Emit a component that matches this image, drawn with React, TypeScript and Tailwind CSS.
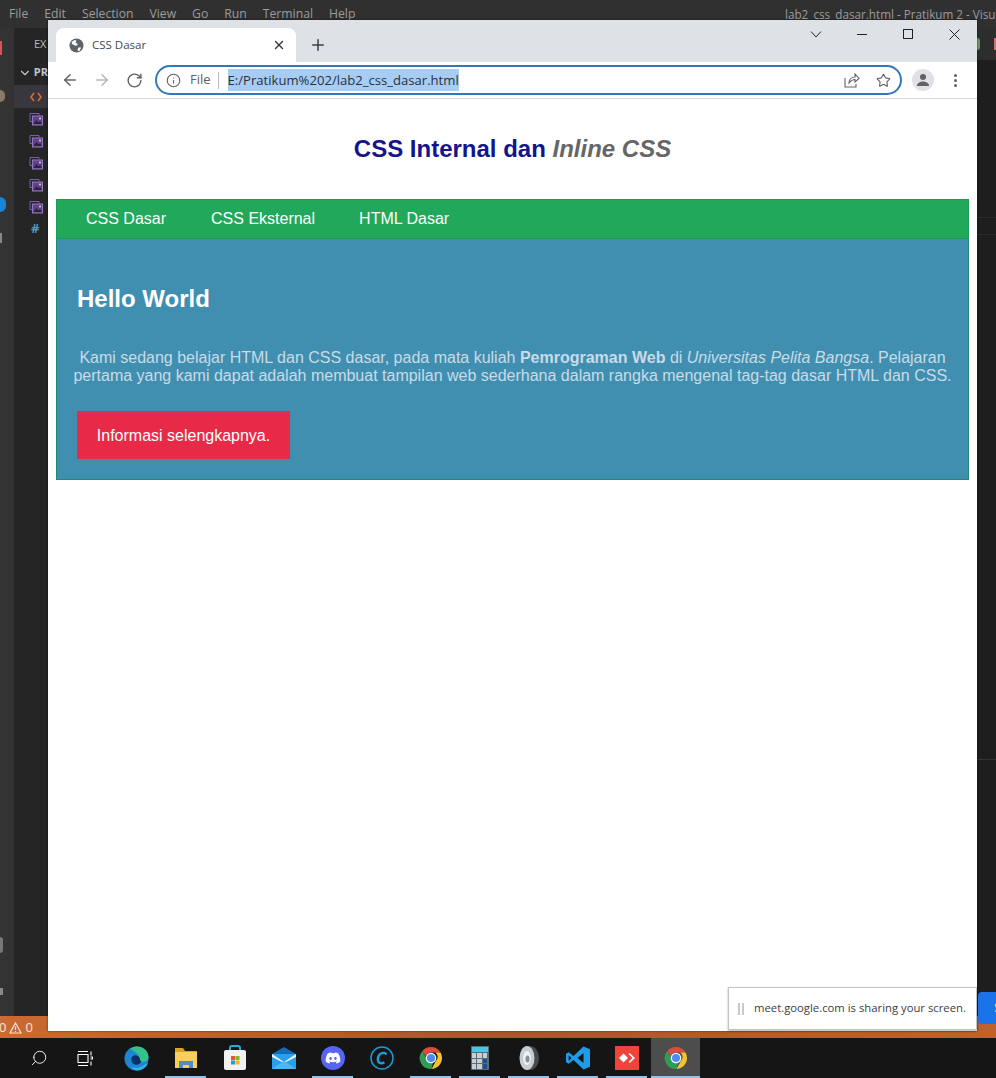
import { ArrowLeft, ArrowRight, ChevronDown, ChevronRight, Info, Plus, RotateCw, Search, Star, X } from "lucide-react";
import { FaDiscord } from "react-icons/fa";

const menu = ["File", "Edit", "Selection", "View", "Go", "Run", "Terminal", "Help"];

function ImageFileIcon() {
  return (
    <svg width="14" height="14" viewBox="0 0 14 14" fill="none">
      <path d="M1 1.500h9v2M1 1.500v8h2" stroke="#7a5ea6" strokeWidth="1" />
      <rect x="3.500" y="4" width="10" height="9" fill="#5f4389" stroke="#9479bd" strokeWidth="1" />
      <path d="M4.500 12l3-4 2 2.500 1.500-1.500 2 3z" fill="#2a2330" />
      <circle cx="11" cy="6.500" r="1" fill="#d8cdea" />
    </svg>
  );
}

function ChromeLogo() {
  return (
    <svg width="24" height="24" viewBox="0 0 24 24">
      <path d="M12 1a11 11 0 0 1 9.530 5.500H12a5.500 5.500 0 0 0-5.200 3.700L3.300 4.900A11 11 0 0 1 12 1z" fill="#dd4b3e" />
      <path d="M21.530 6.500A11 11 0 0 1 12.600 23l4.200-7.900a5.500 5.500 0 0 0-.5-8.600z" fill="#f4c430" />
      <path d="M3.300 4.900l4.600 8.400a5 5 0 0 0 6 3.600L12.600 23A11 11 0 0 1 3.300 4.900z" fill="#2f9e54" />
      <circle cx="12" cy="12" r="5.300" fill="#fff" />
      <circle cx="12" cy="12" r="4" fill="#4c8bf5" />
    </svg>
  );
}

function EdgeLogo() {
  return (
    <svg width="25" height="25" viewBox="0 0 26 26">
      <circle cx="13" cy="13" r="12.500" fill="#1b86d4" />
      <path d="M6 3C9 1 11.500.5 14 .5c6 0 11.500 4.500 11.500 11 0 3-2 5-5 5-2 0-4-1-4-2.500 0-3-3-7.500-10.500-11z" fill="#35c28a" />
      <path d="M8 12c2-4 8-3 8.500 1.500 0 1 .5 2 1.500 2.500-1.500 3-5 4.500-7.500 3C8 17.500 7 14.500 8 12z" fill="#0b2f6b" />
      <path d="M25 18c-2 4.500-6.500 7.500-11 7.500-3 0-5-1.500-6-4 3 1.500 8 2 11-.5 2-1.500 4-2.500 6-3z" fill="#2fb5e8" />
    </svg>
  );
}

function FolderLogo() {
  return (
    <svg width="24" height="22" viewBox="0 0 24 22">
      <path d="M1 1h8l2 3h12v3H1z" fill="#d9a520" />
      <rect x="1" y="5" width="22" height="16" fill="#f6cf5c" />
      <path d="M5 21v-7h14v7h-4v-3H9v3z" fill="#4d8fc4" />
    </svg>
  );
}

function StoreLogo() {
  return (
    <svg width="24" height="26" viewBox="0 0 24 26">
      <path d="M7 7V3a2 2 0 0 1 2-2h6a2 2 0 0 1 2 2v4" fill="none" stroke="#33a6d8" strokeWidth="2" />
      <rect x="1" y="5" width="22" height="20" rx="2" fill="#f2f2f2" />
      <rect x="8" y="11" width="4" height="4" fill="#e8562a" />
      <rect x="12.500" y="11" width="4" height="4" fill="#7cb82f" />
      <rect x="8" y="15.500" width="4" height="4" fill="#1e9ae0" />
      <rect x="12.500" y="15.500" width="4" height="4" fill="#f5b50a" />
    </svg>
  );
}

function MailLogo() {
  return (
    <svg width="24" height="22" viewBox="0 0 24 22">
      <path d="M0 7l12-7 12 7v1H0z" fill="#0f6cbd" />
      <rect y="7" width="24" height="15" fill="#2aa0e8" />
      <path d="M0 7l12 8 12-8v3l-12 6L0 10z" fill="#e8f6fd" />
      <path d="M0 22l12-8 12 8z" fill="#4cb8f0" />
    </svg>
  );
}

function CCleanerLogo() {
  return (
    <svg width="24" height="24" viewBox="0 0 24 24" fill="none">
      <circle cx="12" cy="12" r="11" stroke="#1b9bd8" strokeWidth="1.500" />
      <path d="M16.500 8.500C15.500 6.800 13 6.500 11 7.500c-3 1.500-4 6-2.500 8.500 1.200 1.700 4 1.500 5.800.2" stroke="#1b9bd8" strokeWidth="2.500" />
    </svg>
  );
}

function CalcLogo() {
  const keys = ["a", "b", "c", "d", "e", "f", "g", "h", "i"];
  return (
    <div className="flex h-[24px] w-[18px] flex-col gap-[1px] rounded-[1px] bg-[#5b6b78] p-[1px]">
      <div className="h-[5px] bg-[#45c8ea]" />
      <div className="grid flex-1 grid-cols-3 gap-[1px]">
        {keys.map((k) => (
          <div key={k} className={k === "f" || k === "i" ? "bg-[#1f4f8f]" : "bg-[#c7ced4]"} />
        ))}
      </div>
    </div>
  );
}

function SpeakerLogo() {
  return (
    <svg width="20" height="26" viewBox="0 0 20 26">
      <ellipse cx="11" cy="13" rx="9" ry="12" fill="#4a4a4a" />
      <ellipse cx="8" cy="13" rx="7.500" ry="12" fill="#c9cdd0" />
      <ellipse cx="8" cy="13" rx="4" ry="7" fill="#eef0f1" />
      <ellipse cx="8.500" cy="14" rx="2" ry="3.500" fill="#8c9094" />
    </svg>
  );
}

function VSCodeLogo() {
  return (
    <svg width="24" height="24" viewBox="0 0 24 24">
      <path d="M17.500.5L24 3.200v17.600l-6.500 2.700-10-9.500-4.800 3.700L0 16.300V7.700l2.700-1.400 4.800 3.700z" fill="#1f9ce8" />
      <path d="M17.500 7l-6 5 6 5z" fill="#141414" />
      <path d="M2.700 9.300v5.400L5.500 12z" fill="#141414" />
    </svg>
  );
}

function AnyDeskLogo() {
  return (
    <div className="flex h-[24px] w-[24px] items-center justify-center bg-[#ef443b]">
      <svg width="16" height="10" viewBox="0 0 16 10">
        <path d="M0 5l4.500-4.500L9 5 4.500 9.500z" fill="#fff" />
        <path d="M9.500 1l4 4-4 4 1.200 1 5.300-5-5.300-5z" fill="#fff" />
      </svg>
    </div>
  );
}

const taskbar = [
  { id: "search", icon: <Search size={18} strokeWidth={1.2} className="-scale-x-100 text-white" />, open: false },
  {
    id: "view",
    icon: (
      <svg width="16" height="15" viewBox="0 0 16 15" fill="none" stroke="#fff" strokeWidth="1.100" className="-ml-[5px]">
        <path d="M1 .5h10M1 14.500h10M1 3.500h10v8H1zM14 .5v4M13.500 6h2v2h-2M14 10.500v4" />
      </svg>
    ),
    open: false,
  },
  { id: "edge", icon: <EdgeLogo />, open: false },
  { id: "folder", icon: <FolderLogo />, open: true },
  { id: "store", icon: <StoreLogo />, open: false },
  { id: "mail", icon: <MailLogo />, open: false },
  {
    id: "discord",
    icon: (
      <div className="flex h-[24px] w-[24px] items-center justify-center rounded-full bg-[#5865f2]">
        <FaDiscord size={16} className="text-white" />
      </div>
    ),
    open: true,
  },
  { id: "ccleaner", icon: <CCleanerLogo />, open: false },
  { id: "chrome1", icon: <ChromeLogo />, open: true },
  { id: "calc", icon: <CalcLogo />, open: true },
  { id: "speaker", icon: <SpeakerLogo />, open: true },
  { id: "vscode", icon: <VSCodeLogo />, open: true },
  { id: "anydesk", icon: <AnyDeskLogo />, open: true },
  { id: "chrome2", icon: <ChromeLogo />, open: true, active: true },
];

function VSCodeBackground() {
  return (
    <div className="flex h-[1038px] flex-col bg-[#1e1e1e] font-['Open_Sans',sans-serif]">
      <div className="flex h-[28px] shrink-0 items-start justify-between bg-[#303031] text-[12.200px] text-[#9c9c9c]">
        <div className="flex gap-[16px] pt-[6px] pl-[9px] leading-[16px]">
          {menu.map((m) => (
            <span key={m}>{m}</span>
          ))}
        </div>
        <span className="w-[211px] overflow-hidden pt-[6px] text-[11.700px] leading-[16px] whitespace-nowrap">
          lab2_css_dasar.html - Pratikum 2 - Visual Studio Code
        </span>
      </div>
      <div className="flex min-h-0 flex-1">
        <div className="relative w-[14px] shrink-0 bg-[#333333]">
          <div className="absolute top-[13px] left-0 h-[14px] w-[2px] bg-[#d9534f]" />
          <div className="absolute top-[62px] left-0 h-[12px] w-[5px] rounded-r-full bg-[#8a7a68]" />
          <div className="absolute top-[169px] left-0 h-[15px] w-[6px] rounded-r-full bg-[#1a85d6]" />
          <div className="absolute top-[205px] left-0 h-[10px] w-[2px] bg-[#888888]" />
          <div className="absolute top-[909px] left-0 h-[16px] w-[3px] rounded-r-full bg-[#777777]" />
          <div className="absolute top-[960px] left-0 h-[7px] w-[3px] bg-[#888888]" />
        </div>
        <div className="flex w-[34px] shrink-0 flex-col bg-[#252526] text-[11px] font-bold text-[#bbbbbb]">
          <div className="flex h-[32px] items-center pl-[20px] font-normal">EX</div>
          <div className="flex h-[25px] items-center gap-[2px] pl-[4px] text-[#bcc8d0]">
            <ChevronDown size={14} />
            PR
          </div>
          <div className="flex h-[23px] items-center bg-[#37373d] pl-[16px] text-[12px] text-[#d8673f]">
            <svg width="12" height="10" viewBox="0 0 12 10" fill="none" stroke="#e0683c" strokeWidth="1.600">
              <path d="M4 1L1 5l3 4M8 1l3 4-3 4" />
            </svg>
          </div>
          {["a", "b", "c", "d", "e"].map((k) => (
            <div key={k} className="flex h-[22px] items-center pl-[15px]">
              <ImageFileIcon />
            </div>
          ))}
          <div className="flex h-[22px] items-center pl-[17px] text-[13px] text-[#519aba]">#</div>
          <div className="mt-auto flex h-[22px] items-center gap-[2px] border-t border-[#3c3c3c] pl-[4px] text-[#bcc8d0]">
            <ChevronRight size={14} />
            OU
          </div>
        </div>
        <div className="flex flex-1 flex-col">
          <div className="flex h-[32px] shrink-0 items-center bg-[#2d2d2d]">
            <span className="ml-[929px] h-[12px] w-[3px] rounded-r-full bg-[#6f9a5c]" />
            <span className="ml-[14px] h-[12px] w-[2px] bg-[#c9736a]" />
          </div>
          <div className="h-[158px] shrink-0 border-b border-[#2b2b2b]" />
          <div className="h-[17px] shrink-0 border-b border-[#2b2b2b]" />
          <div className="h-[525px] shrink-0 border-b border-[#333333]" />
        </div>
      </div>
    </div>
  );
}

function WindowControls() {
  return (
    <div className="ml-auto flex h-[28px] items-center self-start text-[#222222]">
      <div className="flex h-[28px] w-[46px] items-center justify-center">
        <svg width="12" height="7" viewBox="0 0 12 7" fill="none" stroke="#222222" strokeWidth="1">
          <path d="M1 .5l5 5.500 5-5.500" />
        </svg>
      </div>
      <div className="flex h-[28px] w-[46px] items-center justify-center">
        <span className="mt-[1px] h-px w-[10px] bg-[#222222]" />
      </div>
      <div className="flex h-[28px] w-[46px] items-center justify-center">
        <span className="h-[10px] w-[10px] border border-[#222222]" />
      </div>
      <div className="flex h-[28px] w-[46px] items-center justify-center">
        <svg width="11" height="11" viewBox="0 0 11 11" fill="none" stroke="#222222" strokeWidth="1">
          <path d="M.5.5l10 10M10.500.5l-10 10" />
        </svg>
      </div>
    </div>
  );
}

function Chrome() {
  return (
    <div className="flex h-[79px] shrink-0 flex-col font-['Open_Sans',sans-serif]">
      <div className="flex h-[42px] items-end bg-[#dee1e6] pl-[8px]">
        <div className="flex h-[34px] w-[240px] items-center rounded-t-[8px] bg-white pr-[10px] pl-[13px] text-[11.500px] text-[#45494d]">
          <svg width="15" height="15" viewBox="0 0 16 16" className="mr-[8px]">
            <circle cx="8" cy="8" r="7.500" fill="#5f6368" />
            <path d="M3 4l3-2 2 1-1 2 2 1v2H6L3 6zM10 10h3l-2 4-2-1z" fill="#fff" />
          </svg>
          <span>CSS Dasar</span>
          <X size={14} strokeWidth={2.400} className="ml-auto text-[#333333]" />
        </div>
        <Plus size={18} strokeWidth={2} className="mb-[8px] ml-[13px] text-[#3c4043]" />
        <WindowControls />
      </div>
      <div className="flex h-[37px] items-center border-b border-[#d8d8d8] bg-white pr-[20px] pl-[13px]">
        <ArrowLeft size={18} strokeWidth={2} className="text-[#5f6368]" />
        <ArrowRight size={18} strokeWidth={2} className="ml-[14px] text-[#b4b6b9]" />
        <RotateCw size={17} strokeWidth={2} className="ml-[15px] text-[#5f6368]" />
        <div className="ml-[12px] flex h-[30px] flex-1 items-center rounded-full border-2 border-[#3476ba] pr-[9px] pl-[9px]">
          <Info size={15} strokeWidth={1.800} className="text-[#5f6368]" />
          <span className="ml-[9px] text-[13px] text-[#5f6368]">File</span>
          <span className="mr-[9px] ml-[7px] h-[17px] w-px bg-[#b8babd]" />
          <span className="bg-[#a8cdf5] text-[13.100px] leading-[22px] text-[#2a3038]">E:/Pratikum%202/lab2_css_dasar.html</span>
          <svg width="16" height="15" viewBox="0 0 16 15" fill="none" stroke="#5f6368" strokeWidth="1.100" className="mr-[16px] ml-auto">
            <path d="M1 5v9h11v-3M5 10c0-4 3-6 6-6V1l4 4.500L11 9V6.500C8.500 6.500 6.500 8 5 10z" />
          </svg>
          <Star size={15} strokeWidth={1.800} className="text-[#5f6368]" />
        </div>
        <div className="ml-[10px] flex h-[22px] w-[22px] items-center justify-center rounded-full bg-[#dfe1e5]">
          <svg width="14" height="14" viewBox="0 0 14 14" fill="#5f6368">
            <circle cx="7" cy="4" r="3" />
            <path d="M1 13c0-3 3-4.500 6-4.500s6 1.500 6 4.500z" />
          </svg>
        </div>
        <div className="ml-[20px] flex flex-col gap-[2px]">
          <span className="h-[3px] w-[3px] rounded-full bg-[#5f6368]" />
          <span className="h-[3px] w-[3px] rounded-full bg-[#5f6368]" />
          <span className="h-[3px] w-[3px] rounded-full bg-[#5f6368]" />
        </div>
      </div>
    </div>
  );
}

function Page() {
  return (
    <div className="flex-1 bg-white px-[8px] font-['Liberation_Sans',sans-serif]">
      <header className="flex h-[100px] items-start justify-center pt-[33px]">
        <h1 className="text-[24px] leading-[33px] font-bold text-[#14148c]">
          CSS Internal dan <em className="text-[#666666]">Inline CSS</em>
        </h1>
      </header>
      <nav className="flex h-[40px] items-center border border-[#1f9a5a] bg-[#22a85a] pl-[7px] text-[16px] text-white">
        <a className="px-[22px]">CSS Dasar</a>
        <a className="ml-px px-[22px]">CSS Eksternal</a>
        <a className="px-[22px]">HTML Dasar</a>
      </nav>
      <section className="h-[241px] border border-t-0 border-[#1f8a70] bg-[#418fb0] px-[20px] pt-[43px]">
        <h2 className="text-[24px] leading-[33px] font-bold text-white">Hello World</h2>
        <p className="-mx-[4px] mt-[34px] text-center text-[16px] leading-[18px] text-[#c8dbe7]">
          Kami sedang belajar HTML dan CSS dasar, pada mata kuliah <b>Pemrograman Web</b> di{" "}
          <i>Universitas Pelita Bangsa</i>. Pelajaran pertama yang kami dapat adalah membuat tampilan web sederhana
          dalam rangka mengenal tag-tag dasar HTML dan CSS.
        </p>
        <button className="mt-[26px] flex h-[48px] w-[213px] items-center justify-center bg-[#e72a48] pt-px text-[16px] text-white">
          Informasi selengkapnya.
        </button>
      </section>
    </div>
  );
}

export default function App() {
  return (
    <div className="relative h-[1078px] w-[996px] overflow-hidden bg-[#1e1e1e]">
      <VSCodeBackground />
      <div className="absolute top-[1016px] left-0 h-[22px] w-[996px] bg-linear-to-r from-[#cb6a32] via-[#a8572b] to-[#c0622e] font-['Open_Sans',sans-serif] text-[13px] leading-[23px] text-[#f3e6dc]">
        <span className="-ml-px flex h-[23px] items-center gap-[3px]">
          0
          <svg width="13" height="12" viewBox="0 0 13 12" fill="none" stroke="#f3e6dc" strokeWidth="1.200">
            <path d="M6.500 1L12 11H1zM6.500 4.500v3.500M6.500 9v1" />
          </svg>
          0
        </span>
      </div>
      <div className="flex h-[40px] bg-[#151515] pl-[14px]">
        {taskbar.map((t) => (
          <div
            key={t.id}
            className={`relative flex h-[40px] w-[49px] items-center justify-center ${t.active ? "bg-[#4d4d4d]" : ""}`}
          >
            {t.icon}
            {t.open && (
              <span
                className={`absolute bottom-0 h-[2px] bg-[#8cc4ec] ${t.active ? "left-0 w-[49px]" : "left-[4px] w-[41px]"}`}
              />
            )}
          </div>
        ))}
      </div>
      <div className="absolute top-[20px] left-[48px] flex h-[1011px] w-[929px] flex-col bg-white shadow-[0_0_2px_rgba(0,0,0,0.6)]">
        <Chrome />
        <Page />
      </div>
      <div className="absolute top-[987px] left-[728px] flex h-[43px] w-[249px] items-center border border-[#c4c4c4] bg-white pl-[9px] font-['Open_Sans',sans-serif] text-[11.300px] text-[#3c4043] shadow-[0_1px_2px_rgba(0,0,0,0.3)]">
        <span className="mr-[10px] flex gap-[2px]">
          <span className="h-[12px] w-[2px] bg-[#c9c9c9]" />
          <span className="h-[12px] w-[2px] bg-[#c9c9c9]" />
        </span>
        <span className="whitespace-nowrap">meet.google.com is sharing your screen.</span>
      </div>
      <div className="absolute top-[992px] left-[978px] flex h-[32px] w-[18px] items-center justify-end overflow-hidden rounded-l-[4px] bg-[#1a73e8] font-['Open_Sans',sans-serif] text-[12px] font-semibold text-white">
        <span className="-mr-[5px]">S</span>
      </div>
    </div>
  );
}
